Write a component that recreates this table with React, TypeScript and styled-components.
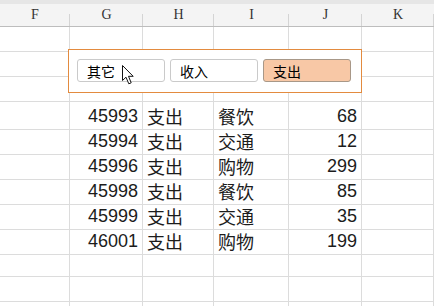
import * as React from 'react'
import styled, { createGlobalStyle } from 'styled-components'

const GlobalStyle = createGlobalStyle`
    html, body {
        margin: 0;
        padding: 0;
        background: #ffffff;
        overflow: hidden;
    }
`

const columns = ['F', 'G', 'H', 'I', 'J', 'K']
const gridCols = '70px 73px 71px 75px 73px 1fr'

type Row = { id: string; kind: string; cat: string; amount: string }

const rows: (Row | null)[] = [
    null,
    null,
    null,
    { id: '45993', kind: '支出', cat: '餐饮', amount: '68' },
    { id: '45994', kind: '支出', cat: '交通', amount: '12' },
    { id: '45996', kind: '支出', cat: '购物', amount: '299' },
    { id: '45998', kind: '支出', cat: '餐饮', amount: '85' },
    { id: '45999', kind: '支出', cat: '交通', amount: '35' },
    { id: '46001', kind: '支出', cat: '购物', amount: '199' },
    null,
    null,
    null,
]

const filters = ['其它', '收入', '支出']

const Sheet = styled.div`
    position: relative;
    width: 434px;
    height: 306px;
    overflow: hidden;
    background: #ffffff;
`

const TopStrip = styled.div`
    height: 4px;
    background: #e6e6e6;
`

const HeaderRow = styled.div`
    display: grid;
    grid-template-columns: ${gridCols};
    height: 22px;
    background: #f4f4f4;
    border-bottom: 1px solid #bdbdbd;
`

const HeaderCell = styled.div`
    position: relative;
    display: flex;
    align-items: center;
    justify-content: center;
    font-family: "Liberation Serif", "DejaVu Serif", serif;
    font-size: 14px;
    color: #333333;

    &::after {
        content: '';
        position: absolute;
        right: 0;
        top: 10px;
        bottom: 0;
        width: 1px;
        background: #d4d4d4;
    }
`

const GridRow = styled.div`
    display: grid;
    grid-template-columns: ${gridCols};
    height: 25px;
`

const Cell = styled.div<{ $align?: 'left' | 'right' }>`
    box-sizing: border-box;
    border-right: 1px solid #dcdcdc;
    border-bottom: 1px solid #dcdcdc;
    display: flex;
    align-items: center;
    justify-content: ${(p) => (p.$align === 'right' ? 'flex-end' : 'flex-start')};
    padding: 1px 4px 0 4px;
    font-family: "Liberation Sans", "Noto Sans CJK SC", sans-serif;
    font-size: 18px;
    color: #1c1c1c;
    white-space: nowrap;
`

const FilterPanel = styled.div`
    position: absolute;
    left: 68px;
    top: 49px;
    width: 294px;
    height: 44px;
    box-sizing: border-box;
    border: 1px solid #e38b3f;
    background: #ffffff;
    display: flex;
    gap: 5px;
    padding: 9px 0 0 8px;
`

const FilterButton = styled.div<{ $active?: boolean }>`
    box-sizing: border-box;
    width: 88px;
    height: 23px;
    border: 1px solid ${(p) => (p.$active ? '#a89888' : '#cacaca')};
    border-radius: 3px;
    background: ${(p) => (p.$active ? '#f8c8a6' : '#ffffff')};
    display: flex;
    align-items: center;
    padding-left: 9px;
    font-family: "Noto Sans CJK SC", sans-serif;
    font-size: 14px;
    color: #000000;
`

const Pointer = styled.svg`
    position: absolute;
    left: 122px;
    top: 65px;
`

export default function App() {
    return (
        <>
            <GlobalStyle />
            <Sheet>
                <TopStrip />
                <HeaderRow>
                    {columns.map((c) => (
                        <HeaderCell key={c}>{c}</HeaderCell>
                    ))}
                </HeaderRow>
                {rows.map((r, i) => (
                    <GridRow key={i}>
                        <Cell />
                        <Cell $align="right">{r?.id}</Cell>
                        <Cell>{r?.kind}</Cell>
                        <Cell>{r?.cat}</Cell>
                        <Cell $align="right">{r?.amount}</Cell>
                        <Cell />
                    </GridRow>
                ))}
                <FilterPanel>
                    {filters.map((f) => (
                        <FilterButton key={f} $active={f === '支出'}>
                            {f}
                        </FilterButton>
                    ))}
                </FilterPanel>
                {/* mouse pointer hovering the first filter */}
                <Pointer width="14" height="21" viewBox="0 0 14 21">
                    <path
                        d="M0.5 0.5 L0.5 15.5 L4 12.2 L6.8 18.8 L9.2 17.8 L6.5 11.3 L11.2 11.3 Z"
                        fill="#ffffff"
                        stroke="#111111"
                        strokeWidth="1"
                        strokeLinejoin="miter"
                    />
                </Pointer>
            </Sheet>
        </>
    )
}
